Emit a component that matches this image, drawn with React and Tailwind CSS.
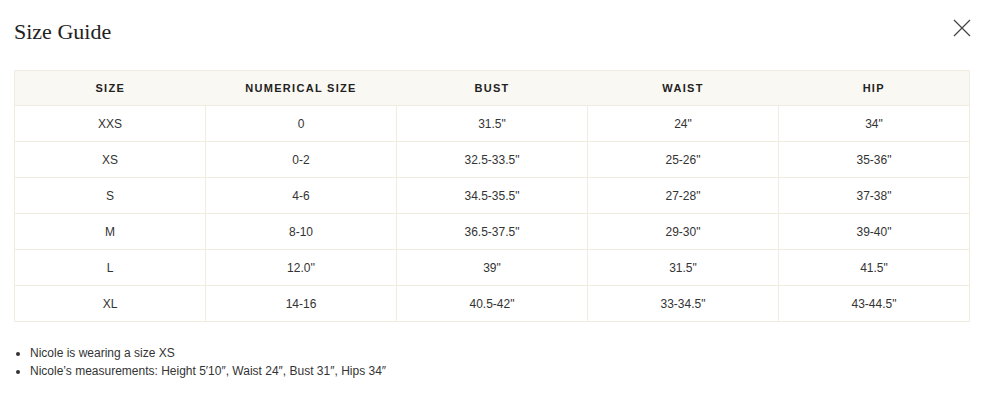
import React from "react";

const rows = [
  ["XXS", "0", "31.5\"", "24\"", "34\""],
  ["XS", "0-2", "32.5-33.5\"", "25-26\"", "35-36\""],
  ["S", "4-6", "34.5-35.5\"", "27-28\"", "37-38\""],
  ["M", "8-10", "36.5-37.5\"", "29-30\"", "39-40\""],
  ["L", "12.0''", "39\"", "31.5\"", "41.5\""],
  ["XL", "14-16", "40.5-42\"", "33-34.5\"", "43-44.5\""],
];
const heads = ["SIZE", "NUMERICAL SIZE", "BUST", "WAIST", "HIP"];

export default function App() {
  return (
    <div className="w-[985px] h-[412px] bg-white px-[14px] relative" style={{ fontFamily: '"Liberation Sans", Arial, sans-serif' }}>
      <div className="h-[70px] flex items-start justify-between">
        <h2 className="mt-[18px] text-[22px] leading-[28px] text-[#222]" style={{ fontFamily: '"Liberation Serif", "DejaVu Serif", serif' }}>Size Guide</h2>
        <button className="mt-[19px] mr-[0px] w-[18px] h-[18px] text-[#333]" aria-label="close">
          <svg width="18" height="18" viewBox="0 0 18 18" fill="none" stroke="#444" strokeWidth="1.2">
            <path d="M1 1L17 17M17 1L1 17" />
          </svg>
        </button>
      </div>
      <table className="w-[956px] border-collapse border border-[#f0ece0] table-fixed">
        <thead>
          <tr className="bg-[#faf8f3] h-[35px]">
            {heads.map((h) => (
              <th key={h} className="text-[11px] font-semibold tracking-[1.3px] text-[#222] text-center align-middle p-0">{h}</th>
            ))}
          </tr>
        </thead>
        <tbody>
          {rows.map((r, i) => (
            <tr key={i} className="h-[36px]">
              {r.map((c, j) => (
                <td key={j} className="border border-[#f0ece0] text-center text-[12px] text-[#333] p-0 align-middle">{c}</td>
              ))}
            </tr>
          ))}
        </tbody>
      </table>
      <ul className="mt-[22px] text-[12px] leading-[18px] text-[#333] list-disc pl-[16px]">
        <li>Nicole is wearing a size XS</li>
        <li>Nicole’s measurements: Height 5′10″, Waist 24″, Bust 31″, Hips 34″</li>
      </ul>
    </div>
  );
}
